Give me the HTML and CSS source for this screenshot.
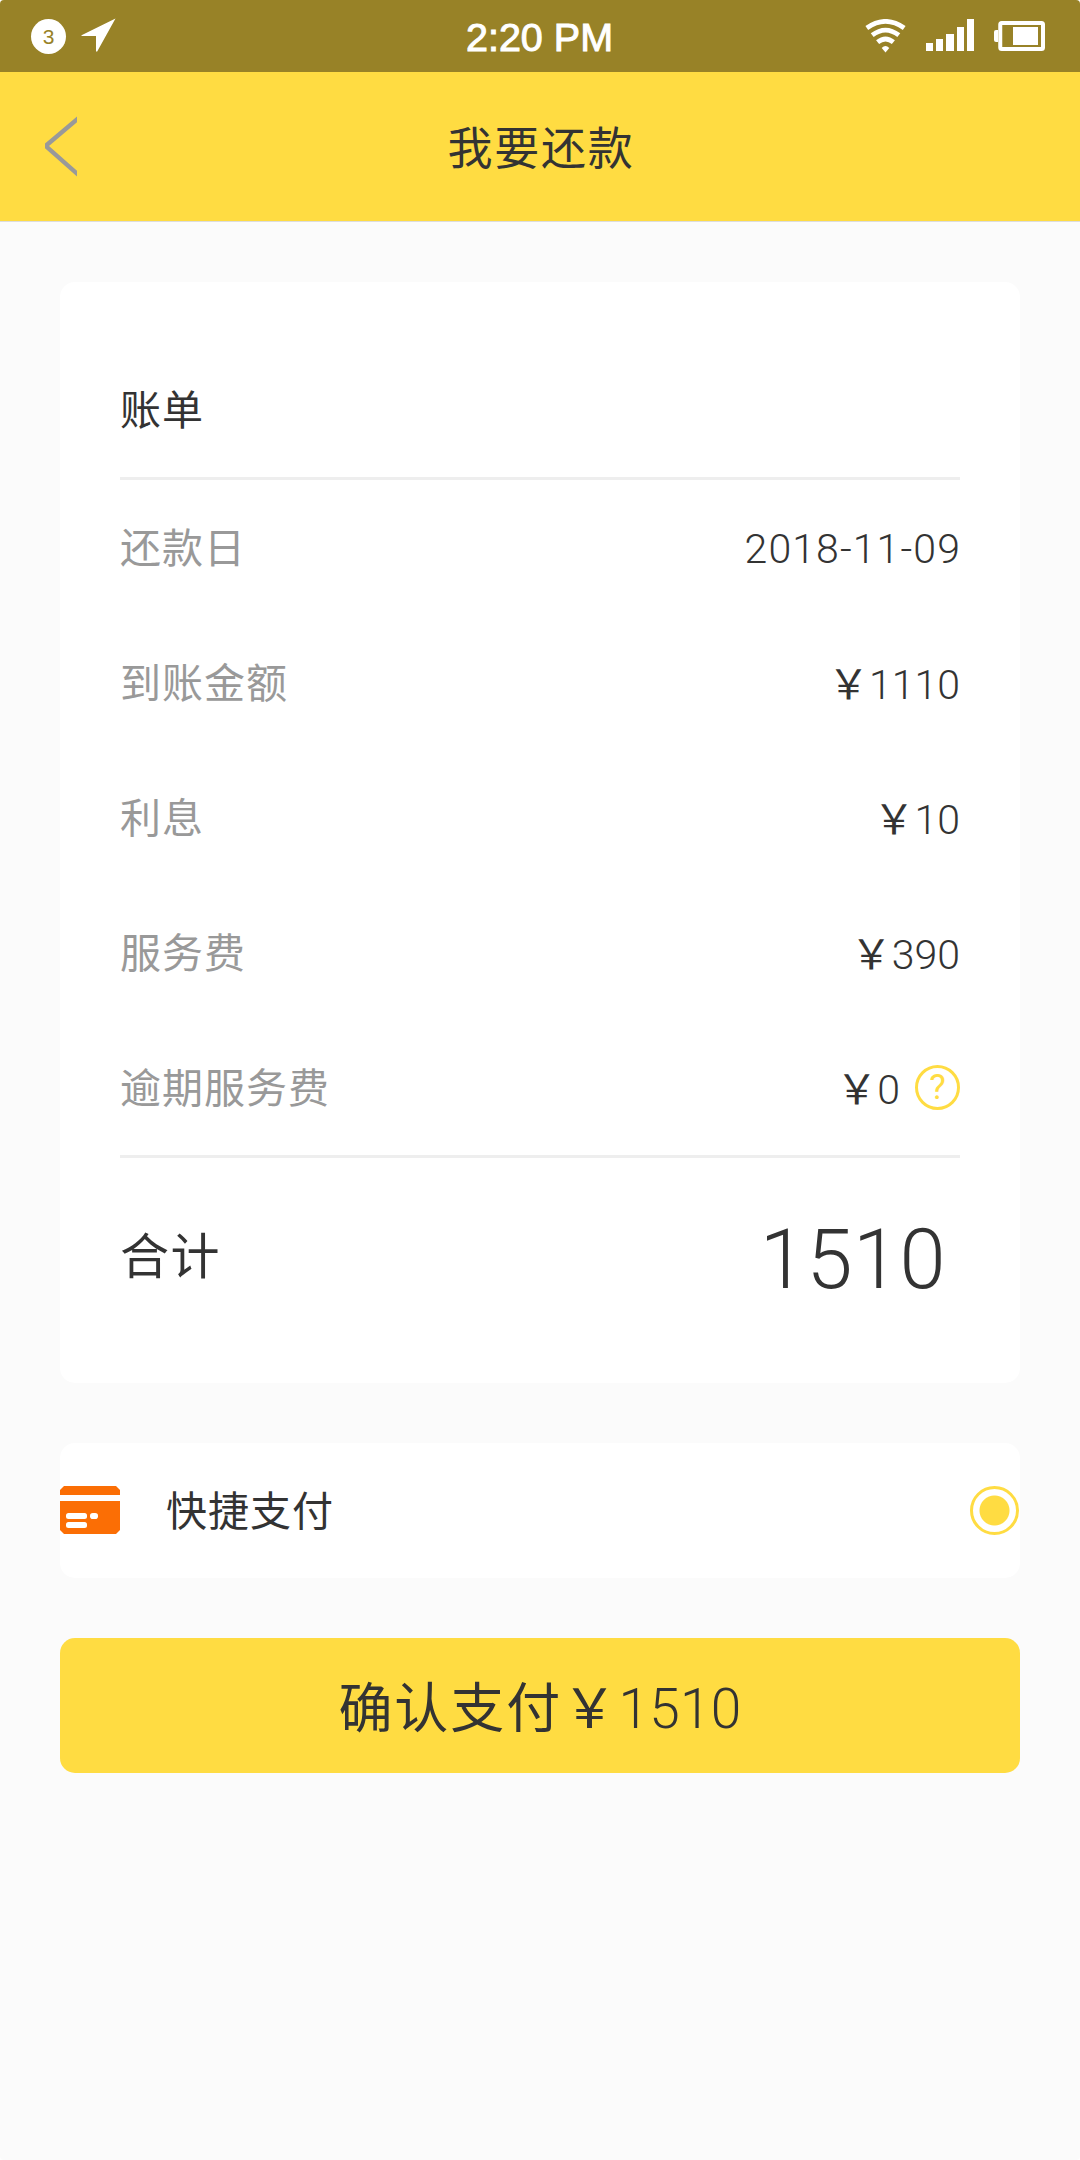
FILE: index.html
```html
<!DOCTYPE html>
<html lang="zh-CN">
<head>
    <meta charset="utf-8">
    <meta name="viewport" content="width=device-width, initial-scale=1, maximum-scale=1">
    <title>我要还款</title>
    <link rel="stylesheet" href="styles.css">
</head>
<body>
    <div class="page">
        <div class="status-bar">
            <div class="status-left">
                <span class="badge">3</span>
                <svg class="location" width="35" height="34" viewBox="0 0 35 34"><path d="M34.5 0.5L0.5 17.3V18H15V33.5H16.2Z" fill="#fff"/></svg>
            </div>
            <span class="time">2:20 PM</span>
            <div class="status-right">
                <svg width="41" height="34" viewBox="0 0 41 34">
                    <g fill="none" stroke="#fff" stroke-width="4.8">
                        <path d="M1.8 9Q20.5 -4.2 39.2 9"/>
                        <path d="M7.2 16.2Q20.5 6 33.8 16.2"/>
                        <path d="M12.6 23.2Q20.5 16.8 28.4 23.2"/>
                    </g>
                    <path d="M16.7 29Q20.5 25 24.3 29L20.5 33.5Z" fill="#fff"/>
                </svg>
                <svg class="signal" width="48" height="32" viewBox="0 0 48 32" fill="#fff">
                    <rect x="0" y="24" width="7" height="8"/>
                    <rect x="10" y="20" width="7" height="12"/>
                    <rect x="20" y="15" width="8" height="17"/>
                    <rect x="31" y="8" width="7" height="24"/>
                    <rect x="41" y="0" width="7" height="32"/>
                </svg>
                <svg class="battery" width="51" height="30" viewBox="0 0 51 30">
                    <path d="M4 9H2Q0 9 0 11V19Q0 21 2 21H4Z" fill="#fff"/>
                    <rect x="6.25" y="2" width="42.75" height="26" rx="1.5" fill="none" stroke="#fff" stroke-width="4"/>
                    <rect x="19" y="6" width="25" height="18" fill="#fff"/>
                </svg>
            </div>
        </div>

        <div class="header">
            <svg class="back" width="32" height="61" viewBox="0 0 32 61"><path d="M35 0.8L2 28.8V31.2L35 60.2" fill="none" stroke="#999" stroke-width="4.4"/></svg>
            <h1>我要还款</h1>
        </div>

        <div class="content">
            <div class="bill">
                <h2>账单</h2>
                <div class="rows">
                    <div class="row">
                        <span class="label">还款日</span>
                        <span class="value date">2018-11-09</span>
                    </div>
                    <div class="row">
                        <span class="label">到账金额</span>
                        <span class="value"><span class="yen">￥</span>1110</span>
                    </div>
                    <div class="row">
                        <span class="label">利息</span>
                        <span class="value"><span class="yen">￥</span>10</span>
                    </div>
                    <div class="row">
                        <span class="label">服务费</span>
                        <span class="value"><span class="yen">￥</span>390</span>
                    </div>
                    <div class="row">
                        <span class="label">逾期服务费</span>
                        <span class="value"><span class="yen">￥</span>0</span>
                        <span class="help">?</span>
                    </div>
                </div>
                <div class="total">
                    <span class="total-label">合计</span>
                    <span class="total-value">1510</span>
                </div>
            </div>

            <div class="pay">
                <svg class="card-icon" width="60" height="48" viewBox="0 0 60 48">
                    <path d="M0 9V4L4 0H56L60 4V9ZM0 15H60V44L56 48H4L0 44Z" fill="#fb6e05"/>
                    <g fill="#fff">
                        <rect x="6" y="27" width="21" height="6" rx="2.5"/>
                        <rect x="30" y="27" width="8" height="6" rx="2.8"/>
                        <rect x="6" y="36" width="21" height="6" rx="2.5"/>
                    </g>
                </svg>
                <span class="pay-name">快捷支付</span>
                <span class="radio"></span>
            </div>

            <button class="confirm">确认支付<span class="yen">￥</span><span class="amount">1510</span></button>
        </div>
    </div>
</body>
</html>
```

FILE: styles.css
```css
* {
    box-sizing: border-box;
}

body {
    margin: 0;
    background-color: #fff;
    color: #333;
    font-family: "Noto Sans CJK SC", sans-serif;
}

svg {
    display: block;
    flex-shrink: 0;
}

.page {
    height: 2160px;
    background-color: #fbfbfb;
    border-radius: 4px;
    overflow: hidden;
}

/* Status bar */
.status-bar {
    display: grid;
    grid-template-columns: 1fr auto 1fr;
    align-items: center;
    height: 72px;
    padding: 0 35px 0 31px;
    background-color: #988227;
    color: #fff;
    font-family: "Liberation Sans", Arial, sans-serif;
}

.status-left,
.status-right {
    display: flex;
    align-items: center;
}

.status-right {
    justify-content: flex-end;
}

.badge {
    width: 35px;
    height: 35px;
    border-radius: 50%;
    background-color: #fff;
    color: #988227;
    font-size: 21px;
    line-height: 35px;
    text-align: center;
}

.location {
    margin-left: 15px;
    margin-bottom: 2px;
}

.time {
    padding: 2px 0 0 3px;
    font-size: 39.5px;
    line-height: 46px;
    -webkit-text-stroke: 1px #fff;
}

.signal {
    margin-left: 20px;
    margin-bottom: 2px;
}

.battery {
    margin-left: 20px;
}

/* Header */
.header {
    display: grid;
    grid-template-columns: 1fr auto 1fr;
    align-items: center;
    height: 150px;
    padding: 0 45px;
    background-color: #ffdc42;
    border-bottom: 1px solid #ddd;
}

.header h1 {
    margin: 0;
    padding: 0 0 2px 2px;
    font-size: 45px;
    font-weight: 400;
    letter-spacing: 1.7px;
    line-height: 66px;
}

/* Content */
.content {
    display: flex;
    flex-direction: column;
    gap: 60px;
    padding: 60px;
}

.bill,
.pay {
    background-color: #fff;
    border-radius: 15px;
}

.bill {
    height: 1101px;
    padding: 0 60px;
}

.bill h2 {
    height: 195px;
    margin: 0;
    padding-top: 95px;
    font-size: 41px;
    font-weight: 400;
    letter-spacing: 1px;
    line-height: 60px;
}

.rows {
    border-top: 3px solid #eee;
    border-bottom: 3px solid #eee;
}

.row {
    display: flex;
    align-items: center;
    height: 135px;
}

.label {
    flex: 1;
    padding-bottom: 5px;
    color: #999;
    font-size: 41px;
    letter-spacing: 1px;
}

.value {
    font-family: Roboto, sans-serif;
    font-size: 41px;
    font-weight: 300;
    line-height: 60px;
}

/* no yen sign here, so the baseline sits a little higher without the padding */
.date {
    padding-top: 3px;
    letter-spacing: 1.1px;
    margin-right: -1px;
}

.yen {
    font-family: "Noto Sans CJK SC", sans-serif;
    font-weight: 400;
}

.help {
    width: 45px;
    height: 45px;
    margin: 0 0 0 15px;
    border: 3px solid #ffdc42;
    border-radius: 50%;
    color: #ffdc42;
    font-family: Roboto, sans-serif;
    font-size: 35px;
    line-height: 40px;
    text-align: center;
}

.total {
    display: flex;
    justify-content: space-between;
    align-items: center;
    height: 198px;
    padding-right: 14px;
}

.total-label {
    padding-bottom: 9px;
    font-size: 49px;
    letter-spacing: 1.4px;
}

.total-value {
    padding-top: 4px;
    font-family: Roboto, sans-serif;
    font-size: 83px;
    font-weight: 300;
    letter-spacing: 0.5px;
}

.pay {
    display: flex;
    align-items: center;
    height: 135px;
}

.card-icon {
    margin-bottom: 1px;
}

.pay-name {
    flex: 1;
    padding: 0 0 5px 46px;
    font-size: 41px;
    letter-spacing: 1px;
}

.radio {
    width: 49px;
    height: 49px;
    margin-right: 1px;
    border: 3px solid #ffdc42;
    border-radius: 50%;
    background: radial-gradient(circle, #ffdc42 14.5px, #fff 15.5px);
}

.confirm {
    height: 135px;
    padding: 0 0 3px;
    border: 0;
    border-radius: 15px;
    background-color: #ffdc42;
    color: #333;
    font-family: "Noto Sans CJK SC", sans-serif;
    font-size: 54px;
    letter-spacing: 2px;
}

.amount {
    font-family: Roboto, sans-serif;
    font-size: 55px;
    font-weight: 300;
    letter-spacing: 0.3px;
}
```
